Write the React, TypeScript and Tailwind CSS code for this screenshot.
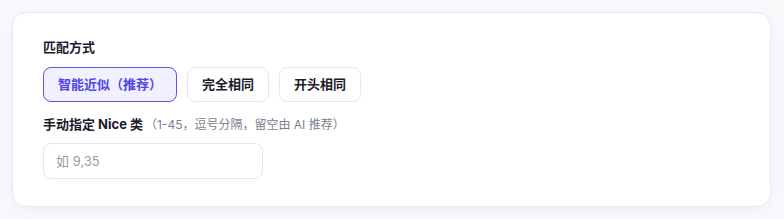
import React, { useState } from 'react';

const modes = ['智能近似（推荐）', '完全相同', '开头相同'];

export default function App() {
  const [mode, setMode] = useState(0);
  const [nice, setNice] = useState('');

  return (
    <div
      className="min-h-[219px] bg-[#f9f9fc] pt-3 pl-3 pr-[13px] pb-3"
      style={{ fontFamily: 'Inter, "Noto Sans CJK SC", sans-serif' }}
    >
      <div className="rounded-[14px] border border-[#e9e7f6] bg-white pt-[24px] px-[30px] pb-[27px] shadow-[0_4px_18px_rgba(99,102,241,0.07)]">
        {/* 匹配方式 */}
        <div className="text-[13px] leading-5 font-bold text-[#1c1c2b]">匹配方式</div>
        <div className="mt-[10px] flex gap-[10px]">
          {modes.map((m, i) => {
            const active = i === mode;
            return (
              <button
                key={m}
                onClick={() => setMode(i)}
                className={`h-[35px] rounded-lg border px-[14px] text-[13px] font-bold ${
                  active
                    ? 'border-[#5b55e6] bg-[#f1f0ff] text-[#4f46e5]'
                    : 'border-[#e6e6ee] bg-white text-[#1c1c2b]'
                }`}
              >
                {m}
              </button>
            );
          })}
        </div>

        {/* Nice 类 */}
        <div className="mt-3 flex items-baseline leading-5">
          <span className="text-[13px] font-bold text-[#1c1c2b]">手动指定 Nice 类</span>
          <span className="ml-0.5 text-xs text-[#7b7f8e]">（1-45，逗号分隔，留空由 AI 推荐）</span>
        </div>
        <input
          value={nice}
          onChange={(e) => setNice(e.target.value)}
          placeholder="如 9,35"
          className="mt-[9px] block h-9 w-[220px] rounded-lg border border-[#e6e6ee] px-3 text-[13px] text-[#1c1c2b] outline-none placeholder:text-[#9a9ca8]"
        />
      </div>
    </div>
  );
}
